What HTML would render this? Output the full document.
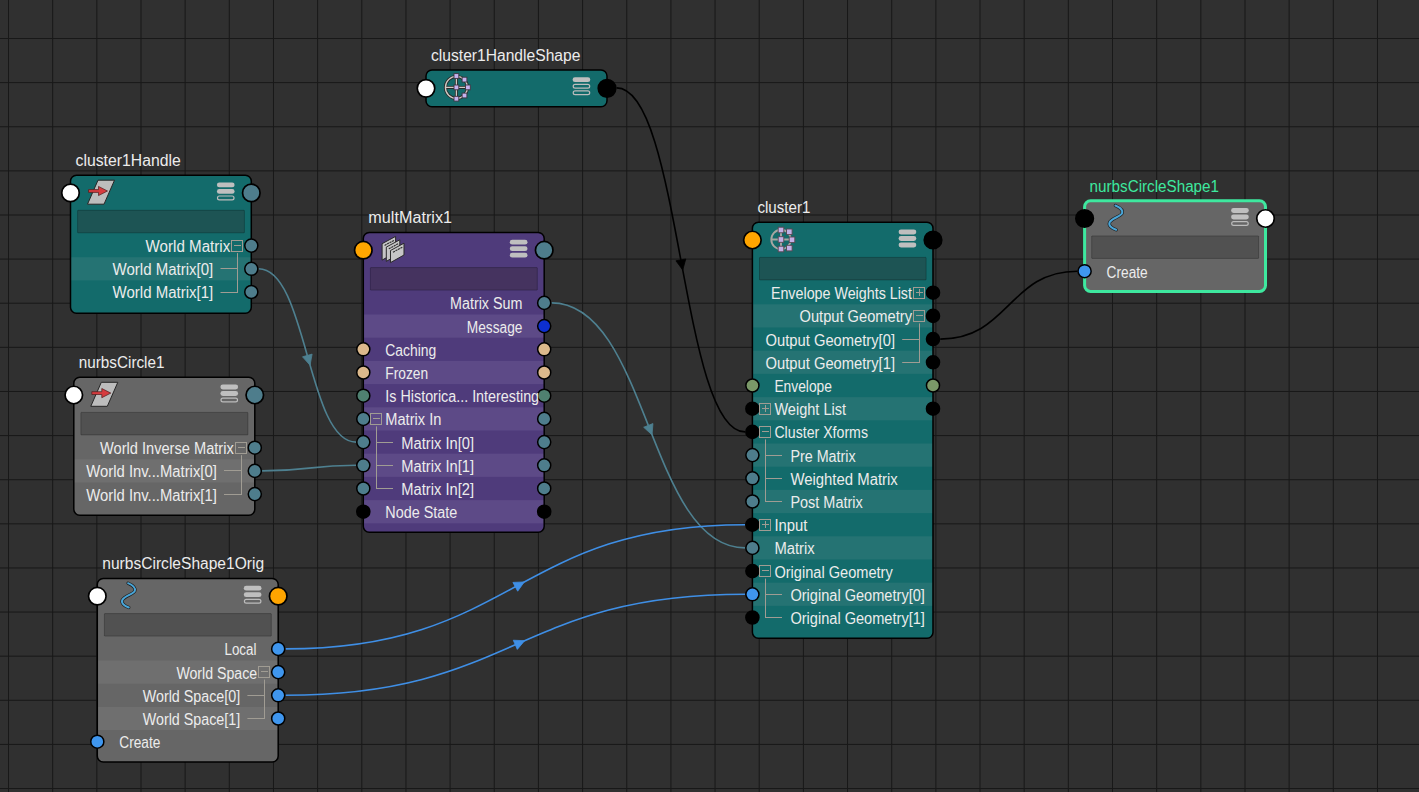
<!DOCTYPE html><html><head><meta charset="utf-8"><style>html,body{margin:0;padding:0;background:#303030;overflow:hidden}svg{display:block}text{font-family:"Liberation Sans",sans-serif;white-space:pre}</style></head><body>
<svg width="1419" height="792" viewBox="0 0 1419 792">
<rect width="1419" height="792" fill="#303030"/>
<rect x="8" y="0" width="1" height="792" fill="#181818"/>
<rect x="52.16" y="0" width="1" height="792" fill="#181818"/>
<rect x="96.32" y="0" width="1" height="792" fill="#181818"/>
<rect x="140.48" y="0" width="1" height="792" fill="#181818"/>
<rect x="184.64" y="0" width="1" height="792" fill="#181818"/>
<rect x="228.8" y="0" width="1" height="792" fill="#181818"/>
<rect x="272.96" y="0" width="1" height="792" fill="#181818"/>
<rect x="317.12" y="0" width="1" height="792" fill="#181818"/>
<rect x="361.28" y="0" width="1" height="792" fill="#181818"/>
<rect x="405.44" y="0" width="1" height="792" fill="#181818"/>
<rect x="449.6" y="0" width="1" height="792" fill="#181818"/>
<rect x="493.76" y="0" width="1" height="792" fill="#181818"/>
<rect x="537.92" y="0" width="1" height="792" fill="#181818"/>
<rect x="582.08" y="0" width="1" height="792" fill="#181818"/>
<rect x="626.24" y="0" width="1" height="792" fill="#181818"/>
<rect x="670.4" y="0" width="1" height="792" fill="#181818"/>
<rect x="714.56" y="0" width="1" height="792" fill="#181818"/>
<rect x="758.72" y="0" width="1" height="792" fill="#181818"/>
<rect x="802.88" y="0" width="1" height="792" fill="#181818"/>
<rect x="847.04" y="0" width="1" height="792" fill="#181818"/>
<rect x="891.2" y="0" width="1" height="792" fill="#181818"/>
<rect x="935.36" y="0" width="1" height="792" fill="#181818"/>
<rect x="979.52" y="0" width="1" height="792" fill="#181818"/>
<rect x="1023.68" y="0" width="1" height="792" fill="#181818"/>
<rect x="1067.84" y="0" width="1" height="792" fill="#181818"/>
<rect x="1112" y="0" width="1" height="792" fill="#181818"/>
<rect x="1156.16" y="0" width="1" height="792" fill="#181818"/>
<rect x="1200.32" y="0" width="1" height="792" fill="#181818"/>
<rect x="1244.48" y="0" width="1" height="792" fill="#181818"/>
<rect x="1288.64" y="0" width="1" height="792" fill="#181818"/>
<rect x="1332.8" y="0" width="1" height="792" fill="#181818"/>
<rect x="1376.96" y="0" width="1" height="792" fill="#181818"/>
<rect x="0" y="38" width="1419" height="1" fill="#181818"/>
<rect x="0" y="82.12" width="1419" height="1" fill="#181818"/>
<rect x="0" y="126.24" width="1419" height="1" fill="#181818"/>
<rect x="0" y="170.36" width="1419" height="1" fill="#181818"/>
<rect x="0" y="214.48" width="1419" height="1" fill="#181818"/>
<rect x="0" y="258.6" width="1419" height="1" fill="#181818"/>
<rect x="0" y="302.72" width="1419" height="1" fill="#181818"/>
<rect x="0" y="346.84" width="1419" height="1" fill="#181818"/>
<rect x="0" y="390.96" width="1419" height="1" fill="#181818"/>
<rect x="0" y="435.08" width="1419" height="1" fill="#181818"/>
<rect x="0" y="479.2" width="1419" height="1" fill="#181818"/>
<rect x="0" y="523.32" width="1419" height="1" fill="#181818"/>
<rect x="0" y="567.44" width="1419" height="1" fill="#181818"/>
<rect x="0" y="611.56" width="1419" height="1" fill="#181818"/>
<rect x="0" y="655.68" width="1419" height="1" fill="#181818"/>
<rect x="0" y="699.8" width="1419" height="1" fill="#181818"/>
<rect x="0" y="743.92" width="1419" height="1" fill="#181818"/>
<rect x="0" y="788.04" width="1419" height="1" fill="#181818"/>
<path d="M258.6,268.8 C307.3,268.8 307.3,442.1 356,442.1" stroke="#4e8090" stroke-width="1.6" fill="none"/><path d="M310.06,365.27 L302.49,356.8 L312.11,354.1Z" fill="#4e8090" stroke="#4e8090" stroke-width="0.8" stroke-linejoin="round"/>
<path d="M262.1,470.9 C309.05,470.9 309.05,465.3 356,465.3" stroke="#4e8090" stroke-width="1.6" fill="none"/>
<path d="M551.5,302.9 C648.3,302.9 648.3,547.9 745.1,547.9" stroke="#4e8090" stroke-width="1.6" fill="none"/><path d="M652.05,434.89 L643.65,427.24 L652.95,423.56Z" fill="#4e8090" stroke="#4e8090" stroke-width="0.8" stroke-linejoin="round"/>
<path d="M616.6,87.9 C680.85,87.9 680.85,431.9 745.1,431.9" stroke="#000000" stroke-width="1.6" fill="none"/><path d="M682.72,269.93 L675.93,260.82 L685.77,258.98Z" fill="#000000" stroke="#000000" stroke-width="0.8" stroke-linejoin="round"/>
<path d="M940.3,339.1 C1008.8,339.1 1008.8,271.2 1077.3,271.2" stroke="#000000" stroke-width="1.6" fill="none"/>
<path d="M285.5,648.9 C515.3,648.9 515.3,524.7 745.1,524.7" stroke="#3f8fe6" stroke-width="1.6" fill="none"/><path d="M524.27,581.95 L517.68,591.2 L512.92,582.4Z" fill="#3f8fe6" stroke="#3f8fe6" stroke-width="0.8" stroke-linejoin="round"/>
<path d="M285.5,695.3 C515.3,695.3 515.3,594.3 745.1,594.3" stroke="#3f8fe6" stroke-width="1.6" fill="none"/><path d="M524.64,640.7 L517.31,649.38 L513.29,640.22Z" fill="#3f8fe6" stroke="#3f8fe6" stroke-width="0.8" stroke-linejoin="round"/>
<clipPath id="c0"><rect x="426" y="70" width="181" height="36.7" rx="6"/></clipPath>
<rect x="426" y="70" width="181" height="36.7" rx="6" fill="#136b6b"/>
<g clip-path="url(#c0)">
</g>
<rect x="426" y="70" width="181" height="36.7" rx="6" fill="none" stroke="#000" stroke-width="1.5"/>
<text x="431" y="60.8" font-size="15.6" fill="#ececec" text-anchor="start" textLength="149.4" lengthAdjust="spacingAndGlyphs">cluster1HandleShape</text>
<g transform="translate(456.4,87.4)"><circle r="11" fill="none" stroke="#2a2a2a" stroke-width="3"/><path d="M-11,0 H11 M0,-11 V11" stroke="#2a2a2a" stroke-width="3"/><circle r="11" fill="none" stroke="#cfcac4" stroke-width="1.3"/><path d="M-11,0 H11 M0,-11 V11" stroke="#cfcac4" stroke-width="1.3"/><rect x="-2.4" y="-13.8" width="4.8" height="4.8" fill="#c5b2ee" stroke="#3d3540" stroke-width="0.9"/><rect x="5.7" y="-10.2" width="4.8" height="4.8" fill="#c5b2ee" stroke="#3d3540" stroke-width="0.9"/><rect x="-2.4" y="-2.4" width="4.8" height="4.8" fill="#c5b2ee" stroke="#3d3540" stroke-width="0.9"/><rect x="9.1" y="-2.4" width="4.8" height="4.8" fill="#c5b2ee" stroke="#3d3540" stroke-width="0.9"/><rect x="-2.4" y="8.9" width="4.8" height="4.8" fill="#c5b2ee" stroke="#3d3540" stroke-width="0.9"/><rect x="5.7" y="5.7" width="4.8" height="4.8" fill="#c5b2ee" stroke="#3d3540" stroke-width="0.9"/></g>
<g><rect x="572.6" y="77.3" width="17.7" height="4.8" rx="2.4" fill="#bfbfbf"/><rect x="573.2" y="84.3" width="16.5" height="3.8" rx="1.9" fill="none" stroke="#bcbcbc" stroke-width="1.2"/><rect x="573.2" y="90.8" width="16.5" height="3.8" rx="1.9" fill="none" stroke="#bcbcbc" stroke-width="1.2"/></g>
<circle cx="426" cy="88.35" r="8.75" fill="#ffffff" stroke="#000" stroke-width="1.7"/>
<circle cx="607" cy="88.35" r="8.75" fill="#000000" stroke="#000" stroke-width="1.7"/>
<clipPath id="c1"><rect x="70.5" y="175.2" width="180.8" height="138" rx="6"/></clipPath>
<rect x="70.5" y="175.2" width="180.8" height="138" rx="6" fill="#136b6b"/>
<g clip-path="url(#c1)">
<rect x="77.6" y="210.3" width="166.8" height="22.5" rx="0.5" fill="#1d5454" stroke="rgba(0,0,0,0.24)" stroke-width="1"/>
<rect x="70.5" y="257.2" width="180.8" height="23.2" fill="#257373"/>
</g>
<rect x="70.5" y="175.2" width="180.8" height="138" rx="6" fill="none" stroke="#000" stroke-width="1.5"/>
<text x="75.5" y="166" font-size="15.6" fill="#ececec" text-anchor="start" textLength="105.3" lengthAdjust="spacingAndGlyphs">cluster1Handle</text>
<g transform="translate(85.5,178.2)"><path d="M12.5,2 L29,2 L18.5,26 L2,26 Z" fill="#bdbdbd" stroke="#262626" stroke-width="1"/><path d="M3,11.4 L13,11.4 L13,8.2 L22,12.8 L13,17.4 L13,14.2 L3,14.2Z" fill="#d63c3f" stroke="#4a1c1c" stroke-width="0.7"/></g>
<g><rect x="216.9" y="182.5" width="17.7" height="4.8" rx="2.4" fill="#bfbfbf"/><rect x="216.9" y="189" width="17.7" height="4.8" rx="2.4" fill="#bfbfbf"/><rect x="217.5" y="196" width="16.5" height="3.8" rx="1.9" fill="none" stroke="#bcbcbc" stroke-width="1.2"/></g>
<path d="M220.5,268.5 H238" stroke="#a09c93" stroke-width="1"/>
<path d="M220.5,292.5 H238" stroke="#a09c93" stroke-width="1"/>
<path d="M237.5,253.1 V293" stroke="#a09c93" stroke-width="1"/>
<circle cx="251.3" cy="245.6" r="6.55" fill="#4e7d8c" stroke="#000" stroke-width="1.5"/>
<circle cx="251.3" cy="268.8" r="6.55" fill="#4e7d8c" stroke="#000" stroke-width="1.5"/>
<circle cx="251.3" cy="292" r="6.55" fill="#4e7d8c" stroke="#000" stroke-width="1.5"/>
<circle cx="70.5" cy="192.9" r="8.75" fill="#ffffff" stroke="#000" stroke-width="1.7"/>
<circle cx="251.3" cy="192.9" r="8.75" fill="#4e7d8c" stroke="#000" stroke-width="1.7"/>
<g transform="translate(237,246)"><rect x="-5.5" y="-5.5" width="11" height="11" fill="none" stroke="#a09c93" stroke-width="1"/><path d="M-3,-0.5 H4" stroke="#a09c93" stroke-width="1"/></g>
<text x="230.3" y="252" font-size="15.6" fill="#ececec" text-anchor="end" textLength="84.7" lengthAdjust="spacingAndGlyphs">World Matrix</text>
<text x="213.3" y="275.2" font-size="15.6" fill="#ececec" text-anchor="end" textLength="100.7" lengthAdjust="spacingAndGlyphs">World Matrix[0]</text>
<text x="213.3" y="298.4" font-size="15.6" fill="#ececec" text-anchor="end" textLength="100.7" lengthAdjust="spacingAndGlyphs">World Matrix[1]</text>
<clipPath id="c2"><rect x="73.8" y="377.3" width="181" height="138" rx="6"/></clipPath>
<rect x="73.8" y="377.3" width="181" height="138" rx="6" fill="#666666"/>
<g clip-path="url(#c2)">
<rect x="80.9" y="412.4" width="167" height="22.5" rx="0.5" fill="#515151" stroke="rgba(0,0,0,0.24)" stroke-width="1"/>
<rect x="73.8" y="459.3" width="181" height="23.2" fill="#6f6f6f"/>
</g>
<rect x="73.8" y="377.3" width="181" height="138" rx="6" fill="none" stroke="#000" stroke-width="1.5"/>
<text x="78.8" y="368.1" font-size="15.6" fill="#ececec" text-anchor="start" textLength="85.7" lengthAdjust="spacingAndGlyphs">nurbsCircle1</text>
<g transform="translate(88.8,380.3)"><path d="M12.5,2 L29,2 L18.5,26 L2,26 Z" fill="#bdbdbd" stroke="#262626" stroke-width="1"/><path d="M3,11.4 L13,11.4 L13,8.2 L22,12.8 L13,17.4 L13,14.2 L3,14.2Z" fill="#d63c3f" stroke="#4a1c1c" stroke-width="0.7"/></g>
<g><rect x="220.4" y="384.6" width="17.7" height="4.8" rx="2.4" fill="#bfbfbf"/><rect x="220.4" y="391.1" width="17.7" height="4.8" rx="2.4" fill="#bfbfbf"/><rect x="221" y="398.1" width="16.5" height="3.8" rx="1.9" fill="none" stroke="#bcbcbc" stroke-width="1.2"/></g>
<path d="M224,470.5 H242" stroke="#a09c93" stroke-width="1"/>
<path d="M224,494.5 H242" stroke="#a09c93" stroke-width="1"/>
<path d="M241.5,455.2 V495" stroke="#a09c93" stroke-width="1"/>
<circle cx="254.8" cy="447.7" r="6.55" fill="#4e7d8c" stroke="#000" stroke-width="1.5"/>
<circle cx="254.8" cy="470.9" r="6.55" fill="#4e7d8c" stroke="#000" stroke-width="1.5"/>
<circle cx="254.8" cy="494.1" r="6.55" fill="#4e7d8c" stroke="#000" stroke-width="1.5"/>
<circle cx="73.8" cy="395" r="8.75" fill="#ffffff" stroke="#000" stroke-width="1.7"/>
<circle cx="254.8" cy="395" r="8.75" fill="#4e7d8c" stroke="#000" stroke-width="1.7"/>
<g transform="translate(241,448)"><rect x="-5.5" y="-5.5" width="11" height="11" fill="none" stroke="#a09c93" stroke-width="1"/><path d="M-3,-0.5 H4" stroke="#a09c93" stroke-width="1"/></g>
<text x="233.8" y="454.1" font-size="15.6" fill="#ececec" text-anchor="end" textLength="133.8" lengthAdjust="spacingAndGlyphs">World Inverse Matrix</text>
<text x="216.8" y="477.3" font-size="15.6" fill="#ececec" text-anchor="end" textLength="130.5" lengthAdjust="spacingAndGlyphs">World Inv...Matrix[0]</text>
<text x="216.8" y="500.5" font-size="15.6" fill="#ececec" text-anchor="end" textLength="130.5" lengthAdjust="spacingAndGlyphs">World Inv...Matrix[1]</text>
<clipPath id="c3"><rect x="363.3" y="232.5" width="180.9" height="299.8" rx="6"/></clipPath>
<rect x="363.3" y="232.5" width="180.9" height="299.8" rx="6" fill="#4f3b7b"/>
<g clip-path="url(#c3)">
<rect x="370.4" y="267.6" width="166.9" height="22.5" rx="0.5" fill="#45335f" stroke="rgba(0,0,0,0.24)" stroke-width="1"/>
<rect x="363.3" y="314.5" width="180.9" height="23.2" fill="#5d4a87"/>
<rect x="363.3" y="360.9" width="180.9" height="23.2" fill="#5d4a87"/>
<rect x="363.3" y="407.3" width="180.9" height="23.2" fill="#5d4a87"/>
<rect x="363.3" y="453.7" width="180.9" height="23.2" fill="#5d4a87"/>
<rect x="363.3" y="500.1" width="180.9" height="23.2" fill="#5d4a87"/>
</g>
<rect x="363.3" y="232.5" width="180.9" height="299.8" rx="6" fill="none" stroke="#000" stroke-width="1.5"/>
<text x="368.3" y="223.3" font-size="15.6" fill="#ececec" text-anchor="start" textLength="83.7" lengthAdjust="spacingAndGlyphs">multMatrix1</text>
<g transform="translate(363.3,232.5)"><path d="M18.8,11.2 L32.3,3.9 L32.3,20 L18.8,27.6Z" fill="#c6c6c6" stroke="#2a2a2a" stroke-width="1"/><path d="M21.3,12.9 L30.6,7.9" stroke="#2e2e2e" stroke-width="1.1" stroke-dasharray="2.2,0.6"/><path d="M23,14.6 L36.5,7.3 L36.5,21.25 L23,28.85Z" fill="#c6c6c6" stroke="#2a2a2a" stroke-width="1"/><path d="M25.5,16.3 L34.8,11.3" stroke="#2e2e2e" stroke-width="1.1" stroke-dasharray="2.2,0.6"/><path d="M27.2,18 L40.7,10.7 L40.7,22.5 L27.2,30.1Z" fill="#c6c6c6" stroke="#2a2a2a" stroke-width="1"/><path d="M29.7,19.7 L39,14.7" stroke="#2e2e2e" stroke-width="1.1" stroke-dasharray="2.2,0.6"/></g>
<g><rect x="509.8" y="239.8" width="17.7" height="4.8" rx="2.4" fill="#bfbfbf"/><rect x="509.8" y="246.3" width="17.7" height="4.8" rx="2.4" fill="#bfbfbf"/><rect x="509.8" y="252.8" width="17.7" height="4.8" rx="2.4" fill="#bfbfbf"/></g>
<path d="M376.3,442.5 H393" stroke="#a09c93" stroke-width="1"/>
<path d="M376.3,465.5 H393" stroke="#a09c93" stroke-width="1"/>
<path d="M376.3,488.5 H393" stroke="#a09c93" stroke-width="1"/>
<path d="M376.5,426.4 V489" stroke="#a09c93" stroke-width="1"/>
<circle cx="544.2" cy="302.9" r="6.55" fill="#4e7d8c" stroke="#000" stroke-width="1.5"/>
<circle cx="544.2" cy="326.1" r="6.55" fill="#0d2fd0" stroke="#000" stroke-width="1.5"/>
<circle cx="363.3" cy="349.3" r="6.55" fill="#dcb98c" stroke="#000" stroke-width="1.5"/>
<circle cx="544.2" cy="349.3" r="6.55" fill="#dcb98c" stroke="#000" stroke-width="1.5"/>
<circle cx="363.3" cy="372.5" r="6.55" fill="#dcb98c" stroke="#000" stroke-width="1.5"/>
<circle cx="544.2" cy="372.5" r="6.55" fill="#dcb98c" stroke="#000" stroke-width="1.5"/>
<circle cx="363.3" cy="395.7" r="6.55" fill="#4f8070" stroke="#000" stroke-width="1.5"/>
<circle cx="544.2" cy="395.7" r="6.55" fill="#4f8070" stroke="#000" stroke-width="1.5"/>
<circle cx="363.3" cy="418.9" r="6.55" fill="#4e7d8c" stroke="#000" stroke-width="1.5"/>
<circle cx="544.2" cy="418.9" r="6.55" fill="#4e7d8c" stroke="#000" stroke-width="1.5"/>
<circle cx="363.3" cy="442.1" r="6.55" fill="#4e7d8c" stroke="#000" stroke-width="1.5"/>
<circle cx="544.2" cy="442.1" r="6.55" fill="#4e7d8c" stroke="#000" stroke-width="1.5"/>
<circle cx="363.3" cy="465.3" r="6.55" fill="#4e7d8c" stroke="#000" stroke-width="1.5"/>
<circle cx="544.2" cy="465.3" r="6.55" fill="#4e7d8c" stroke="#000" stroke-width="1.5"/>
<circle cx="363.3" cy="488.5" r="6.55" fill="#4e7d8c" stroke="#000" stroke-width="1.5"/>
<circle cx="544.2" cy="488.5" r="6.55" fill="#4e7d8c" stroke="#000" stroke-width="1.5"/>
<circle cx="363.3" cy="511.7" r="6.55" fill="#000000" stroke="#000" stroke-width="1.5"/>
<circle cx="544.2" cy="511.7" r="6.55" fill="#000000" stroke="#000" stroke-width="1.5"/>
<circle cx="363.3" cy="250.2" r="8.75" fill="#ffa500" stroke="#000" stroke-width="1.7"/>
<circle cx="544.2" cy="250.2" r="8.75" fill="#4e7d8c" stroke="#000" stroke-width="1.7"/>
<text x="522.4" y="309.3" font-size="15.6" fill="#ececec" text-anchor="end" textLength="72.3" lengthAdjust="spacingAndGlyphs">Matrix Sum</text>
<text x="522.4" y="332.5" font-size="15.6" fill="#ececec" text-anchor="end" textLength="55.6" lengthAdjust="spacingAndGlyphs">Message</text>
<text x="385.3" y="355.7" font-size="15.6" fill="#ececec" text-anchor="start" textLength="51" lengthAdjust="spacingAndGlyphs">Caching</text>
<text x="385.3" y="378.9" font-size="15.6" fill="#ececec" text-anchor="start" textLength="42.8" lengthAdjust="spacingAndGlyphs">Frozen</text>
<text x="385.3" y="402.1" font-size="15.6" fill="#ececec" text-anchor="start" textLength="153.8" lengthAdjust="spacingAndGlyphs">Is Historica... Interesting</text>
<g transform="translate(376,419)"><rect x="-5.5" y="-5.5" width="11" height="11" fill="none" stroke="#a09c93" stroke-width="1"/><path d="M-3,-0.5 H4" stroke="#a09c93" stroke-width="1"/></g>
<text x="385.3" y="425.3" font-size="15.6" fill="#ececec" text-anchor="start" textLength="56.1" lengthAdjust="spacingAndGlyphs">Matrix In</text>
<text x="401.3" y="448.5" font-size="15.6" fill="#ececec" text-anchor="start" textLength="72.7" lengthAdjust="spacingAndGlyphs">Matrix In[0]</text>
<text x="401.3" y="471.7" font-size="15.6" fill="#ececec" text-anchor="start" textLength="72.7" lengthAdjust="spacingAndGlyphs">Matrix In[1]</text>
<text x="401.3" y="494.9" font-size="15.6" fill="#ececec" text-anchor="start" textLength="72.7" lengthAdjust="spacingAndGlyphs">Matrix In[2]</text>
<text x="385.3" y="518.1" font-size="15.6" fill="#ececec" text-anchor="start" textLength="71.9" lengthAdjust="spacingAndGlyphs">Node State</text>
<clipPath id="c4"><rect x="752.4" y="222.3" width="180.6" height="415.9" rx="6"/></clipPath>
<rect x="752.4" y="222.3" width="180.6" height="415.9" rx="6" fill="#136b6b"/>
<g clip-path="url(#c4)">
<rect x="759.5" y="257.4" width="166.6" height="22.5" rx="0.5" fill="#1d5454" stroke="rgba(0,0,0,0.24)" stroke-width="1"/>
<rect x="752.4" y="304.3" width="180.6" height="23.2" fill="#257373"/>
<rect x="752.4" y="350.7" width="180.6" height="23.2" fill="#257373"/>
<rect x="752.4" y="397.1" width="180.6" height="23.2" fill="#257373"/>
<rect x="752.4" y="443.5" width="180.6" height="23.2" fill="#257373"/>
<rect x="752.4" y="489.9" width="180.6" height="23.2" fill="#257373"/>
<rect x="752.4" y="536.3" width="180.6" height="23.2" fill="#257373"/>
<rect x="752.4" y="582.7" width="180.6" height="23.2" fill="#257373"/>
</g>
<rect x="752.4" y="222.3" width="180.6" height="415.9" rx="6" fill="none" stroke="#000" stroke-width="1.5"/>
<text x="757.4" y="213.1" font-size="15.6" fill="#ececec" text-anchor="start" textLength="53" lengthAdjust="spacingAndGlyphs">cluster1</text>
<g transform="translate(781,239.5)"><circle r="9.7" fill="none" stroke="#a9a6a2" stroke-width="1.9"/><path d="M-9.7,0 H11 M0,-9.5 V9.5" stroke="#a9a6a2" stroke-width="1.9"/><rect x="-2.8" y="-12.3" width="5.6" height="5.6" fill="#c2b0e6" stroke="#574850" stroke-width="0.9"/><rect x="5.5" y="-10.5" width="5.6" height="5.6" fill="#c2b0e6" stroke="#574850" stroke-width="0.9"/><rect x="-2.8" y="-2.8" width="5.6" height="5.6" fill="#c2b0e6" stroke="#574850" stroke-width="0.9"/><rect x="8.2" y="-2.5" width="5.6" height="5.6" fill="#c2b0e6" stroke="#574850" stroke-width="0.9"/><rect x="-2.8" y="6.7" width="5.6" height="5.6" fill="#c2b0e6" stroke="#574850" stroke-width="0.9"/><rect x="5.5" y="5.8" width="5.6" height="5.6" fill="#c2b0e6" stroke="#574850" stroke-width="0.9"/></g>
<g><rect x="898.6" y="229.6" width="17.7" height="4.8" rx="2.4" fill="#bfbfbf"/><rect x="898.6" y="236.1" width="17.7" height="4.8" rx="2.4" fill="#bfbfbf"/><rect x="898.6" y="242.6" width="17.7" height="4.8" rx="2.4" fill="#bfbfbf"/></g>
<path d="M765.4,455.5 H782" stroke="#a09c93" stroke-width="1"/>
<path d="M765.4,478.5 H782" stroke="#a09c93" stroke-width="1"/>
<path d="M765.4,501.5 H782" stroke="#a09c93" stroke-width="1"/>
<path d="M765.5,439.4 V502" stroke="#a09c93" stroke-width="1"/>
<path d="M765.4,594.5 H782" stroke="#a09c93" stroke-width="1"/>
<path d="M765.4,617.5 H782" stroke="#a09c93" stroke-width="1"/>
<path d="M765.5,578.6 V618" stroke="#a09c93" stroke-width="1"/>
<path d="M902.2,339.5 H920" stroke="#a09c93" stroke-width="1"/>
<path d="M902.2,362.5 H920" stroke="#a09c93" stroke-width="1"/>
<path d="M919.5,323.4 V363" stroke="#a09c93" stroke-width="1"/>
<circle cx="933" cy="292.7" r="6.55" fill="#000000" stroke="#000" stroke-width="1.5"/>
<circle cx="933" cy="315.9" r="6.55" fill="#000000" stroke="#000" stroke-width="1.5"/>
<circle cx="933" cy="339.1" r="6.55" fill="#000000" stroke="#000" stroke-width="1.5"/>
<circle cx="933" cy="362.3" r="6.55" fill="#000000" stroke="#000" stroke-width="1.5"/>
<circle cx="752.4" cy="385.5" r="6.55" fill="#7a9868" stroke="#000" stroke-width="1.5"/>
<circle cx="933" cy="385.5" r="6.55" fill="#7a9868" stroke="#000" stroke-width="1.5"/>
<circle cx="752.4" cy="408.7" r="6.55" fill="#000000" stroke="#000" stroke-width="1.5"/>
<circle cx="933" cy="408.7" r="6.55" fill="#000000" stroke="#000" stroke-width="1.5"/>
<circle cx="752.4" cy="431.9" r="6.55" fill="#000000" stroke="#000" stroke-width="1.5"/>
<circle cx="752.4" cy="455.1" r="6.55" fill="#4e7d8c" stroke="#000" stroke-width="1.5"/>
<circle cx="752.4" cy="478.3" r="6.55" fill="#4e7d8c" stroke="#000" stroke-width="1.5"/>
<circle cx="752.4" cy="501.5" r="6.55" fill="#4e7d8c" stroke="#000" stroke-width="1.5"/>
<circle cx="752.4" cy="524.7" r="6.55" fill="#000000" stroke="#000" stroke-width="1.5"/>
<circle cx="752.4" cy="547.9" r="6.55" fill="#4e7d8c" stroke="#000" stroke-width="1.5"/>
<circle cx="752.4" cy="571.1" r="6.55" fill="#000000" stroke="#000" stroke-width="1.5"/>
<circle cx="752.4" cy="594.3" r="6.55" fill="#3f96ee" stroke="#000" stroke-width="1.5"/>
<circle cx="752.4" cy="617.5" r="6.55" fill="#000000" stroke="#000" stroke-width="1.5"/>
<circle cx="752.4" cy="240" r="8.75" fill="#ffa500" stroke="#000" stroke-width="1.7"/>
<circle cx="933" cy="240" r="8.75" fill="#000000" stroke="#000" stroke-width="1.7"/>
<g transform="translate(919,293)"><rect x="-5.5" y="-5.5" width="11" height="11" fill="none" stroke="#a09c93" stroke-width="1"/><path d="M-3,-0.5 H4" stroke="#a09c93" stroke-width="1"/><path d="M0.5,-4 V3" stroke="#a09c93" stroke-width="1"/></g>
<text x="912" y="299.1" font-size="15.6" fill="#ececec" text-anchor="end" textLength="141.1" lengthAdjust="spacingAndGlyphs">Envelope Weights List</text>
<g transform="translate(919,316)"><rect x="-5.5" y="-5.5" width="11" height="11" fill="none" stroke="#a09c93" stroke-width="1"/><path d="M-3,-0.5 H4" stroke="#a09c93" stroke-width="1"/></g>
<text x="912" y="322.3" font-size="15.6" fill="#ececec" text-anchor="end" textLength="112.5" lengthAdjust="spacingAndGlyphs">Output Geometry</text>
<text x="895" y="345.5" font-size="15.6" fill="#ececec" text-anchor="end" textLength="129.4" lengthAdjust="spacingAndGlyphs">Output Geometry[0]</text>
<text x="895" y="368.7" font-size="15.6" fill="#ececec" text-anchor="end" textLength="129.4" lengthAdjust="spacingAndGlyphs">Output Geometry[1]</text>
<text x="774.4" y="391.9" font-size="15.6" fill="#ececec" text-anchor="start" textLength="57.6" lengthAdjust="spacingAndGlyphs">Envelope</text>
<g transform="translate(765,409)"><rect x="-5.5" y="-5.5" width="11" height="11" fill="none" stroke="#a09c93" stroke-width="1"/><path d="M-3,-0.5 H4" stroke="#a09c93" stroke-width="1"/><path d="M0.5,-4 V3" stroke="#a09c93" stroke-width="1"/></g>
<text x="774.4" y="415.1" font-size="15.6" fill="#ececec" text-anchor="start" textLength="71.6" lengthAdjust="spacingAndGlyphs">Weight List</text>
<g transform="translate(765,432)"><rect x="-5.5" y="-5.5" width="11" height="11" fill="none" stroke="#a09c93" stroke-width="1"/><path d="M-3,-0.5 H4" stroke="#a09c93" stroke-width="1"/></g>
<text x="774.4" y="438.3" font-size="15.6" fill="#ececec" text-anchor="start" textLength="93.6" lengthAdjust="spacingAndGlyphs">Cluster Xforms</text>
<text x="790.4" y="461.5" font-size="15.6" fill="#ececec" text-anchor="start" textLength="65.3" lengthAdjust="spacingAndGlyphs">Pre Matrix</text>
<text x="790.4" y="484.7" font-size="15.6" fill="#ececec" text-anchor="start" textLength="107.4" lengthAdjust="spacingAndGlyphs">Weighted Matrix</text>
<text x="790.4" y="507.9" font-size="15.6" fill="#ececec" text-anchor="start" textLength="72.3" lengthAdjust="spacingAndGlyphs">Post Matrix</text>
<g transform="translate(765,525)"><rect x="-5.5" y="-5.5" width="11" height="11" fill="none" stroke="#a09c93" stroke-width="1"/><path d="M-3,-0.5 H4" stroke="#a09c93" stroke-width="1"/><path d="M0.5,-4 V3" stroke="#a09c93" stroke-width="1"/></g>
<text x="774.4" y="531.1" font-size="15.6" fill="#ececec" text-anchor="start" textLength="33" lengthAdjust="spacingAndGlyphs">Input</text>
<text x="774.4" y="554.3" font-size="15.6" fill="#ececec" text-anchor="start" textLength="40.3" lengthAdjust="spacingAndGlyphs">Matrix</text>
<g transform="translate(765,571)"><rect x="-5.5" y="-5.5" width="11" height="11" fill="none" stroke="#a09c93" stroke-width="1"/><path d="M-3,-0.5 H4" stroke="#a09c93" stroke-width="1"/></g>
<text x="774.4" y="577.5" font-size="15.6" fill="#ececec" text-anchor="start" textLength="118.3" lengthAdjust="spacingAndGlyphs">Original Geometry</text>
<text x="790.4" y="600.7" font-size="15.6" fill="#ececec" text-anchor="start" textLength="134.5" lengthAdjust="spacingAndGlyphs">Original Geometry[0]</text>
<text x="790.4" y="623.9" font-size="15.6" fill="#ececec" text-anchor="start" textLength="134.5" lengthAdjust="spacingAndGlyphs">Original Geometry[1]</text>
<clipPath id="c5"><rect x="97.3" y="578.5" width="180.9" height="183.5" rx="6"/></clipPath>
<rect x="97.3" y="578.5" width="180.9" height="183.5" rx="6" fill="#666666"/>
<g clip-path="url(#c5)">
<rect x="104.4" y="613.6" width="166.9" height="22.5" rx="0.5" fill="#515151" stroke="rgba(0,0,0,0.24)" stroke-width="1"/>
<rect x="97.3" y="660.5" width="180.9" height="23.2" fill="#6f6f6f"/>
<rect x="97.3" y="706.9" width="180.9" height="23.2" fill="#6f6f6f"/>
</g>
<rect x="97.3" y="578.5" width="180.9" height="183.5" rx="6" fill="none" stroke="#000" stroke-width="1.5"/>
<text x="102.3" y="569.3" font-size="15.6" fill="#ececec" text-anchor="start" textLength="161.8" lengthAdjust="spacingAndGlyphs">nurbsCircleShape1Orig</text>
<g transform="translate(115.3,580.5)"><path d="M12.8,2.7 C17,4.5 20.5,7.5 19.5,10.5 C18.5,13.5 9,15.5 7,19.5 C5.5,23 9.5,25.5 13.5,27" fill="none" stroke="#1c1c1c" stroke-width="3.3" stroke-linecap="round"/><path d="M12.8,2.7 C17,4.5 20.5,7.5 19.5,10.5 C18.5,13.5 9,15.5 7,19.5 C5.5,23 9.5,25.5 13.5,27" fill="none" stroke="#4aa6d8" stroke-width="2" stroke-linecap="round"/></g>
<g><rect x="243.8" y="585.8" width="17.7" height="4.8" rx="2.4" fill="#bfbfbf"/><rect x="243.8" y="592.3" width="17.7" height="4.8" rx="2.4" fill="#bfbfbf"/><rect x="244.4" y="599.3" width="16.5" height="3.8" rx="1.9" fill="none" stroke="#bcbcbc" stroke-width="1.2"/></g>
<path d="M247.4,695.5 H265" stroke="#a09c93" stroke-width="1"/>
<path d="M247.4,718.5 H265" stroke="#a09c93" stroke-width="1"/>
<path d="M264.5,679.6 V719" stroke="#a09c93" stroke-width="1"/>
<circle cx="278.2" cy="648.9" r="6.55" fill="#3f96ee" stroke="#000" stroke-width="1.5"/>
<circle cx="278.2" cy="672.1" r="6.55" fill="#3f96ee" stroke="#000" stroke-width="1.5"/>
<circle cx="278.2" cy="695.3" r="6.55" fill="#3f96ee" stroke="#000" stroke-width="1.5"/>
<circle cx="278.2" cy="718.5" r="6.55" fill="#3f96ee" stroke="#000" stroke-width="1.5"/>
<circle cx="97.3" cy="741.7" r="6.55" fill="#3f96ee" stroke="#000" stroke-width="1.5"/>
<circle cx="97.3" cy="596.2" r="8.75" fill="#ffffff" stroke="#000" stroke-width="1.7"/>
<circle cx="278.2" cy="596.2" r="8.75" fill="#ffa500" stroke="#000" stroke-width="1.7"/>
<text x="256.4" y="655.3" font-size="15.6" fill="#ececec" text-anchor="end" textLength="31.9" lengthAdjust="spacingAndGlyphs">Local</text>
<g transform="translate(264,672)"><rect x="-5.5" y="-5.5" width="11" height="11" fill="none" stroke="#a09c93" stroke-width="1"/><path d="M-3,-0.5 H4" stroke="#a09c93" stroke-width="1"/></g>
<text x="257.2" y="678.5" font-size="15.6" fill="#ececec" text-anchor="end" textLength="80.8" lengthAdjust="spacingAndGlyphs">World Space</text>
<text x="240.2" y="701.7" font-size="15.6" fill="#ececec" text-anchor="end" textLength="97.5" lengthAdjust="spacingAndGlyphs">World Space[0]</text>
<text x="240.2" y="724.9" font-size="15.6" fill="#ececec" text-anchor="end" textLength="97.5" lengthAdjust="spacingAndGlyphs">World Space[1]</text>
<text x="119.3" y="748.1" font-size="15.6" fill="#ececec" text-anchor="start" textLength="41.1" lengthAdjust="spacingAndGlyphs">Create</text>
<clipPath id="c6"><rect x="1084.6" y="200.8" width="180.9" height="90.6" rx="6"/></clipPath>
<rect x="1084.6" y="200.8" width="180.9" height="90.6" rx="6" fill="#666666"/>
<g clip-path="url(#c6)">
<rect x="1091.7" y="235.9" width="166.9" height="22.5" rx="0.5" fill="#515151" stroke="rgba(0,0,0,0.24)" stroke-width="1"/>
</g>
<rect x="1084.6" y="200.8" width="180.9" height="90.6" rx="6" fill="none" stroke="#3ee89f" stroke-width="3"/>
<text x="1089.6" y="191.6" font-size="15.6" fill="#3ee89f" text-anchor="start" textLength="129.4" lengthAdjust="spacingAndGlyphs">nurbsCircleShape1</text>
<g transform="translate(1102.6,202.8)"><path d="M12.8,2.7 C17,4.5 20.5,7.5 19.5,10.5 C18.5,13.5 9,15.5 7,19.5 C5.5,23 9.5,25.5 13.5,27" fill="none" stroke="#1c1c1c" stroke-width="3.3" stroke-linecap="round"/><path d="M12.8,2.7 C17,4.5 20.5,7.5 19.5,10.5 C18.5,13.5 9,15.5 7,19.5 C5.5,23 9.5,25.5 13.5,27" fill="none" stroke="#4aa6d8" stroke-width="2" stroke-linecap="round"/></g>
<g><rect x="1231.1" y="208.1" width="17.7" height="4.8" rx="2.4" fill="#bfbfbf"/><rect x="1231.1" y="214.6" width="17.7" height="4.8" rx="2.4" fill="#bfbfbf"/><rect x="1231.7" y="221.6" width="16.5" height="3.8" rx="1.9" fill="none" stroke="#bcbcbc" stroke-width="1.2"/></g>
<circle cx="1084.6" cy="271.2" r="6.55" fill="#3f96ee" stroke="#000" stroke-width="1.5"/>
<circle cx="1084.6" cy="218.5" r="8.75" fill="#000000" stroke="#000" stroke-width="1.7"/>
<circle cx="1265.5" cy="218.5" r="8.75" fill="#ffffff" stroke="#000" stroke-width="1.7"/>
<text x="1106.6" y="277.6" font-size="15.6" fill="#ececec" text-anchor="start" textLength="41.1" lengthAdjust="spacingAndGlyphs">Create</text>
</svg></body></html>
